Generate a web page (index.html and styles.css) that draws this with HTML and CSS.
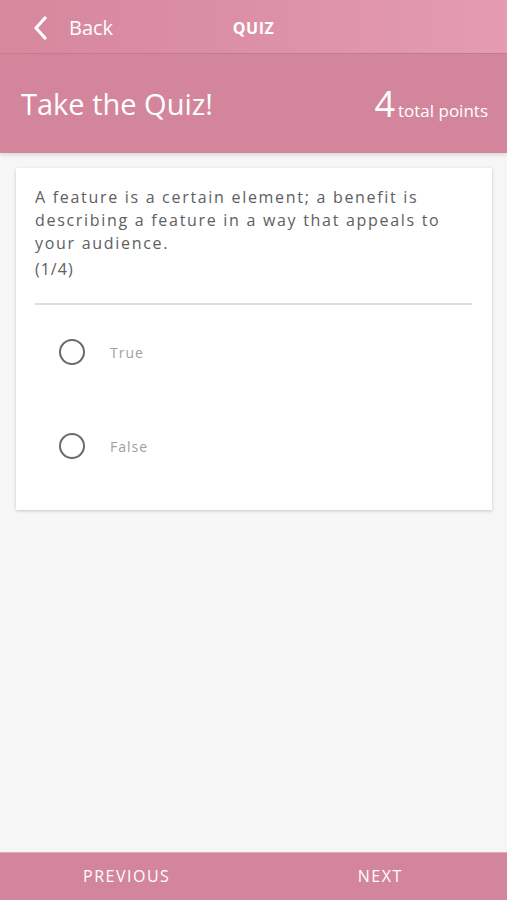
FILE: index.html
```html
<!DOCTYPE html>
<html>
<head>
<meta charset="utf-8">
<link rel="stylesheet" href="styles.css">
</head>
<body>
<div class="app">
  <div class="topbar">
    <div class="back">
      <svg class="chev" width="16" height="24" viewBox="0 0 16 24"><path d="M13 2 L4 12 L13 22" fill="none" stroke="#fff" stroke-width="3.2" stroke-linecap="round" stroke-linejoin="round"/></svg>
      <span>Back</span>
    </div>
    <div class="title">QUIZ</div>
  </div>
  <div class="header">
    <div class="h-title">Take the Quiz!</div>
    <div class="points"><span class="num">4</span><span class="lbl">total points</span></div>
  </div>
  <div class="content">
    <div class="card">
      <div class="question">A feature is a certain element; a benefit is describing a feature in a way that appeals to your audience.</div>
      <div class="counter">(1/4)</div>
      <div class="divider"></div>
      <div class="option"><span class="radio"></span><span class="opt-label">True</span></div>
      <div class="option"><span class="radio"></span><span class="opt-label">False</span></div>
    </div>
  </div>
  <div class="footer">
    <div class="fbtn">PREVIOUS</div>
    <div class="fbtn">NEXT</div>
  </div>
</div>
</body>
</html>
```
FILE: styles.css
```css
* { box-sizing: border-box; }
html, body { margin: 0; padding: 0; }
body { font-family: "Open Sans", "Noto Sans", sans-serif; background: #f6f6f6; }
.app { width: 507px; height: 900px; display: flex; flex-direction: column; }
.topbar {
  height: 54px; position: relative; display: flex; align-items: center; padding-top: 4px;
  background: linear-gradient(90deg, #d6889d 0%, #dc90a5 50%, #e59cb0 100%);
  border-bottom: 1px solid #c87d91;
  color: #fff;
}
.back { display: flex; align-items: center; padding-left: 32px; font-size: 20px; }
.back .chev { margin-right: 21px; margin-top: -2px; }
.back span { margin-top: -2px; }
.title { position: absolute; left: 0; right: 0; top: 17px; text-align: center; font-weight: 700; font-size: 16px; letter-spacing: 0.5px; pointer-events: none; }
.header {
  height: 99px; background: #d3869b; display: flex; align-items: center; justify-content: space-between;
  padding: 0 19px 0 21px; color: #fff; box-shadow: 0 2px 4px rgba(0,0,0,0.12); position: relative; z-index: 1;
}
.h-title { font-size: 29px; font-weight: 400; margin-top: -1px; }
.points { display: flex; align-items: baseline; }
.points .num { font-size: 36px; font-weight: 400; line-height: 1; margin-right: 3px; }
.points .lbl { font-size: 17px; }
.content { flex: 1; padding: 15px 15px 0 16px; }
.card {
  background: #fff; box-shadow: 0 1px 3px rgba(0,0,0,0.2); padding: 18px 20px 17px 19px;
}
.question, .counter { font-size: 16px; line-height: 23px; letter-spacing: 1.7px; color: #5d6061; }
.question { padding-right: 0; }
.counter { margin-top: 3px; letter-spacing: 1px; }
.divider { height: 2px; background: #dedede; margin: 22px 0 0; }
.option { display: flex; align-items: center; height: 94px; padding-left: 24px; }
.radio { width: 26px; height: 26px; border: 2.5px solid #6b6b6b; border-radius: 50%; margin-right: 25px; }
.opt-label { font-size: 14px; letter-spacing: 1px; color: #a0a0a0; }
.footer { height: 48px; background: #d3869b; display: flex; border-top: 1px solid #e3aab8; }
.fbtn { flex: 1; display: flex; align-items: center; justify-content: center; color: #fff; font-size: 16px; letter-spacing: 1.5px; margin-top: -2px; }
```
